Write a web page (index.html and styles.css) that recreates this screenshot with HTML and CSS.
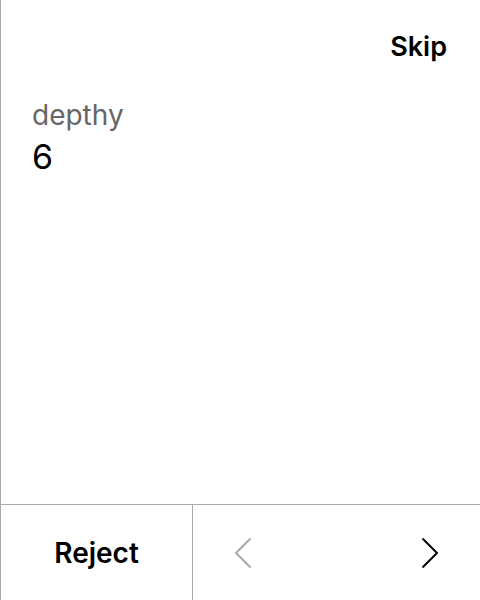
FILE: index.html
```html
<!DOCTYPE html>
<html>
<head>
<meta charset="utf-8">
<link rel="stylesheet" href="styles.css">
</head>
<body>
<div class="screen">
  <header class="header">
    <button class="skip">Skip</button>
  </header>
  <main class="content">
    <div class="label">depthy</div>
    <div class="value">6</div>
  </main>
  <footer class="footer">
    <button class="reject">Reject</button>
    <div class="nav">
      <button class="nav-btn prev" aria-label="Previous">
        <svg width="18" height="32" viewBox="0 0 18 32"><path d="M16.5 1.5 L2 16 L16.5 30.5" fill="none" stroke="currentColor" stroke-width="2"/></svg>
      </button>
      <button class="nav-btn next" aria-label="Next">
        <svg width="18" height="32" viewBox="0 0 18 32"><path d="M1.5 1.5 L16 16 L1.5 30.5" fill="none" stroke="currentColor" stroke-width="2"/></svg>
      </button>
    </div>
  </footer>
</div>
</body>
</html>
```

FILE: styles.css
```css
* { box-sizing: border-box; }
html, body { margin: 0; padding: 0; background: #fff; }
body { font-family: Inter, "Noto Sans", sans-serif; color: #000; }
button { font-family: inherit; background: none; border: 0; padding: 0; margin: 0; cursor: pointer; color: inherit; }
.screen {
  width: 480px; height: 600px;
  border-left: 1px solid #aaa;
  display: flex; flex-direction: column;
}
.header {
  height: 94px;
  display: flex; justify-content: flex-end; align-items: center;
  padding-right: 33px;
}
.skip { font-size: 27px; font-weight: 600; line-height: 30px; }
.content { flex: 1; padding-left: 31px; padding-top: 2px; }
.label { font-size: 28px; color: #666; line-height: 38px; }
.value { font-size: 34px; line-height: 46px; }
.footer {
  height: 96px;
  border-top: 1px solid #aaa;
  display: flex;
}
.reject {
  width: 192px; border-right: 1px solid #aaa;
  font-size: 28px; font-weight: 600;
  display: flex; align-items: center; justify-content: center;
}
.nav { flex: 1; display: flex; justify-content: space-between; align-items: center; }
.nav-btn { width: 100px; height: 100%; display: flex; align-items: center; justify-content: center; }
.prev { color: #aaa; }
.next { color: #000; }
```
